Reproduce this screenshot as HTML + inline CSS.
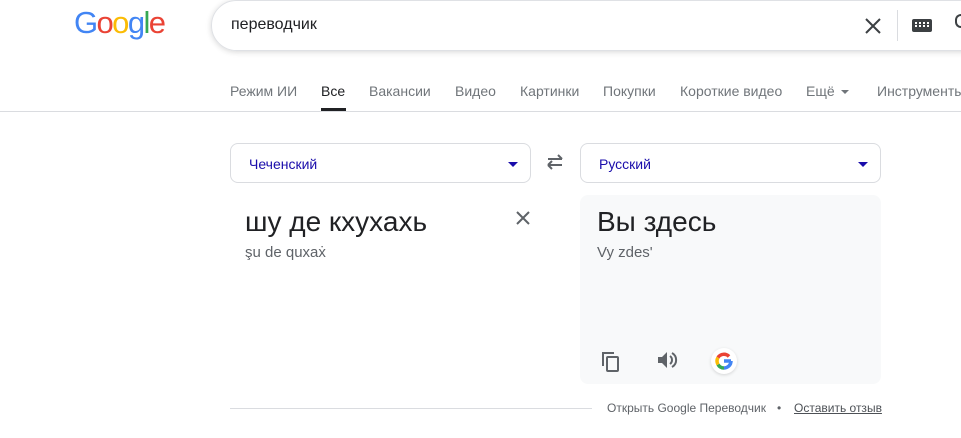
<!DOCTYPE html>
<html><head><meta charset="utf-8"><style>
*{margin:0;padding:0;box-sizing:border-box}
body{width:961px;height:438px;overflow:hidden;background:#fff;font-family:"Liberation Sans",Arial,sans-serif;position:relative}
.a{position:absolute;white-space:nowrap}
.logo{left:74px;top:5px;font-size:31px;letter-spacing:-1.6px;font-weight:400}
.search{left:211px;top:0;width:800px;height:51px;border:1px solid #dfe1e5;border-radius:26px;box-shadow:0 1px 6px rgba(32,33,36,.18)}
.tab{top:83px;font-size:14px;color:#70757a}
.sel{top:143px;width:301px;height:40px;border:1px solid #dadce0;border-radius:8px}
.sel span{position:absolute;left:18px;top:12px;font-size:14px;color:#1a0dab}
.sel i{position:absolute;right:12px;top:18px;border-left:5px solid transparent;border-right:5px solid transparent;border-top:5px solid #1a0dab}
</style></head><body>
<div class="a logo"><span style="color:#4285f4">G</span><span style="color:#ea4335">o</span><span style="color:#fbbc05">o</span><span style="color:#4285f4">g</span><span style="color:#34a853">l</span><span style="color:#ea4335">e</span></div>
<div class="a search"></div>
<div class="a" style="left:231px;top:16px;font-size:16px;color:#202124">переводчик</div>
<svg class="a" style="left:864px;top:17px" width="18" height="18" viewBox="0 0 18 18"><path d="M2 2L16 16M16 2L2 16" stroke="#3c4043" stroke-width="2"/></svg>
<div class="a" style="left:897px;top:10px;width:1px;height:31px;background:#dadce0"></div>
<div class="a" style="left:912px;top:19px;width:20px;height:13px;background:#3c4043;border-radius:2px"></div>
<div class="a" style="left:915px;top:22px;width:14px;height:5px;border-top:2px dotted #fff;border-bottom:2px dotted #fff"></div>
<div class="a" style="left:955px;top:14px;width:7px;height:14px;border:2px solid #3c4043;border-right:none;border-radius:6px 0 0 6px"></div>
<div class="a tab" style="left:230px">Режим ИИ</div>
<div class="a tab" style="left:321px;color:#202124">Все</div>
<div class="a" style="left:321px;top:108px;width:25px;height:3px;background:#202124"></div>
<div class="a tab" style="left:369px">Вакансии</div>
<div class="a tab" style="left:455px">Видео</div>
<div class="a tab" style="left:520px">Картинки</div>
<div class="a tab" style="left:603px">Покупки</div>
<div class="a tab" style="left:680px">Короткие видео</div>
<div class="a tab" style="left:806px">Ещё</div>
<div class="a" style="left:841px;top:90px;border-left:4px solid transparent;border-right:4px solid transparent;border-top:4px solid #70757a"></div>
<div class="a tab" style="left:877px">Инструменты</div>
<div class="a" style="left:0;top:111px;width:961px;height:1px;background:#dadce0"></div>
<div class="a sel" style="left:230px"><span>Чеченский</span><i></i></div>
<div class="a sel" style="left:580px"><span>Русский</span><i></i></div>
<svg class="a" style="left:545px;top:154px" width="20" height="16" viewBox="0 0 20 16"><path d="M3 5H17M13 1L17 5M17 11H3M7 7L3 11M7 15L3 11" stroke="#5f6368" stroke-width="2" fill="none"/></svg>
<div class="a" style="left:245px;top:206px;font-size:28px;color:#202124">шу де кхухахь</div>
<div class="a" style="left:245px;top:244px;font-size:15px;color:#5f6368">şu de quxaẋ</div>
<svg class="a" style="left:515px;top:210px" width="16" height="16" viewBox="0 0 16 16"><path d="M2 2L14 14M14 2L2 14" stroke="#5f6368" stroke-width="2"/></svg>
<div class="a" style="left:580px;top:195px;width:301px;height:189px;background:#f8f9fa;border-radius:8px"></div>
<div class="a" style="left:597px;top:206px;font-size:28px;color:#202124">Вы здесь</div>
<div class="a" style="left:597px;top:244px;font-size:15px;color:#5f6368">Vy zdes'</div>
<svg class="a" style="left:601px;top:351px" width="20" height="22" viewBox="0 0 20 22"><path d="M2 15V2H13" stroke="#5f6368" stroke-width="2" fill="none"/><rect x="6" y="6" width="11" height="14" rx="1" stroke="#5f6368" stroke-width="2" fill="none"/></svg>
<svg class="a" style="left:657px;top:350px" width="22" height="20" viewBox="0 0 22 20"><path d="M1 7H5L10 2V18L5 13H1Z" fill="#5f6368"/><path d="M13 6A5 5 0 0 1 13 14M15 3A8 8 0 0 1 15 17" stroke="#5f6368" stroke-width="2" fill="none"/></svg>
<div class="a" style="left:711px;top:348px;width:26px;height:26px;border-radius:50%;background:#fff;box-shadow:0 1px 3px rgba(0,0,0,.15)"></div>
<svg class="a" style="left:715px;top:352px" width="18" height="18" viewBox="0 0 18 18"><path d="M16 9H9" stroke="#4285f4" stroke-width="3.5"/><path d="M16 9A7 7 0 0 1 9 16" stroke="#4285f4" stroke-width="3.5" fill="none"/><path d="M9 16A7 7 0 0 1 3 12.5" stroke="#34a853" stroke-width="3.5" fill="none"/><path d="M3 12.5A7 7 0 0 1 3 5.5" stroke="#fbbc05" stroke-width="3.5" fill="none"/><path d="M3 5.5A7 7 0 0 1 14 4.5" stroke="#ea4335" stroke-width="3.5" fill="none"/></svg>
<div class="a" style="left:230px;top:408px;width:362px;height:1px;background:#dadce0"></div>
<div class="a" style="left:607px;top:401px;font-size:12px;color:#5f6368">Открыть Google Переводчик</div>
<div class="a" style="left:777px;top:401px;font-size:12px;color:#5f6368">•</div>
<div class="a" style="left:794px;top:401px;font-size:12px;color:#4d5156;text-decoration:underline">Оставить отзыв</div>
</body></html>
